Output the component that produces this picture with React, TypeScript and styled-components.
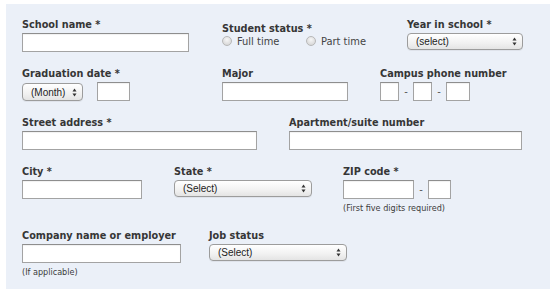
import React from 'react';
import styled, { createGlobalStyle } from 'styled-components';

const GlobalStyle = createGlobalStyle`
  html, body {
    margin: 0;
    padding: 0;
    background: #ffffff;
  }
  body {
    font-family: "DejaVu Sans Condensed", "DejaVu Sans", Verdana, sans-serif;
  }
`;

const Panel = styled.div`
  margin: 4px 0 0 6px;
  width: 544px;
  height: 285px;
  box-sizing: border-box;
  padding: 14px 0 0 16px;
  background: #ebf0f8;
`;

const Row = styled.div`
  display: flex;
  align-items: flex-start;
  margin-bottom: 15px;
`;

const Field = styled.div<{ $w?: number; $offset?: number }>`
  flex: 0 0 ${(p) => (p.$w ? `${p.$w}px` : 'auto')};
  padding-top: ${(p) => p.$offset || 0}px;
`;

const Label = styled.div`
  font-size: 10.8px;
  line-height: 14px;
  font-weight: bold;
  color: #363636;
  margin-bottom: 1px;
  white-space: nowrap;
`;

const Controls = styled.div`
  display: flex;
  align-items: flex-start;
`;

const TextInput = styled.div<{ $w: number }>`
  width: ${(p) => p.$w}px;
  height: 19px;
  box-sizing: border-box;
  background: #ffffff;
  border: 1px solid #a3a3a3;
  border-top-color: #8e8e8e;
  box-shadow: inset 0 1px 1px rgba(0, 0, 0, 0.06);
`;

const Dash = styled.span`
  width: 14px;
  text-align: center;
  font-size: 11px;
  line-height: 19px;
  color: #555;
`;

const SelectBox = styled.div<{ $w: number; $h?: number }>`
  width: ${(p) => p.$w}px;
  height: ${(p) => p.$h || 17}px;
  margin-top: 1px;
  box-sizing: border-box;
  display: flex;
  align-items: center;
  justify-content: space-between;
  padding: 0 5px 0 8px;
  border: 1px solid #9c9c9c;
  border-radius: 4px;
  background: linear-gradient(#ffffff, #f1f1f1 60%, #e4e4e4);
  box-shadow: 0 1px 0 rgba(0, 0, 0, 0.05);
  font-family: "Liberation Sans", Arial, sans-serif;
  font-size: 10px;
  color: #222;
`;

const Hint = styled.div`
  font-size: 9px;
  line-height: 12px;
  color: #3c3c3c;
  margin-top: 3px;
  white-space: nowrap;
`;

const RadioGroup = styled.div`
  display: flex;
  align-items: center;
  height: 14px;
  margin-top: -3px;
`;

const RadioItem = styled.label<{ $w: number }>`
  width: ${(p) => p.$w}px;
  display: flex;
  align-items: center;
  font-size: 11px;
  color: #444;
  white-space: nowrap;
`;

const RadioDot = styled.span`
  width: 10px;
  height: 10px;
  border-radius: 50%;
  margin-right: 5px;
  box-sizing: border-box;
  border: 1px solid #b8b8b8;
  background: radial-gradient(circle at 50% 35%, #f6f6f6, #d0d0d0);
`;

const Arrows = () => (
  <svg width="5" height="9" viewBox="0 0 5 9">
    <path d="M2.5 0.5 L4.5 3.5 L0.5 3.5 Z" fill="#333" />
    <path d="M2.5 8.5 L4.5 5.5 L0.5 5.5 Z" fill="#333" />
  </svg>
);

const Select = ({ w, text, h }: { w: number; text: string; h?: number }) => (
  <SelectBox $w={w} $h={h}>
    <span>{text}</span>
    <Arrows />
  </SelectBox>
);

export default function App() {
  return (
    <>
      <GlobalStyle />
      <Panel>
        <Row>
          <Field $w={200}>
            <Label>School name *</Label>
            <TextInput $w={167} />
          </Field>
          <Field $w={185} $offset={4}>
            <Label>Student status *</Label>
            <RadioGroup>
              <RadioItem $w={84}>
                <RadioDot />
                Full time
              </RadioItem>
              <RadioItem $w={80}>
                <RadioDot />
                Part time
              </RadioItem>
            </RadioGroup>
          </Field>
          <Field>
            <Label>Year in school *</Label>
            <Select w={116} text="(select)" />
          </Field>
        </Row>

        <Row>
          <Field $w={200}>
            <Label>Graduation date *</Label>
            <Controls>
              <Select w={61} h={18} text="(Month)" />
              <span style={{ width: 14 }} />
              <TextInput $w={33} />
            </Controls>
          </Field>
          <Field $w={158}>
            <Label>Major</Label>
            <TextInput $w={126} />
          </Field>
          <Field>
            <Label>Campus phone number</Label>
            <Controls>
              <TextInput $w={19} />
              <Dash>-</Dash>
              <TextInput $w={19} />
              <Dash>-</Dash>
              <TextInput $w={24} />
            </Controls>
          </Field>
        </Row>

        <Row>
          <Field $w={267}>
            <Label>Street address *</Label>
            <TextInput $w={235} />
          </Field>
          <Field>
            <Label>Apartment/suite number</Label>
            <TextInput $w={233} />
          </Field>
        </Row>

        <Row>
          <Field $w={152}>
            <Label>City *</Label>
            <TextInput $w={120} />
          </Field>
          <Field $w={169}>
            <Label>State *</Label>
            <Select w={138} text="(Select)" />
          </Field>
          <Field>
            <Label>ZIP code *</Label>
            <Controls>
              <TextInput $w={71} />
              <Dash>-</Dash>
              <TextInput $w={23} />
            </Controls>
            <Hint>(First five digits required)</Hint>
          </Field>
        </Row>

        <Row>
          <Field $w={187}>
            <Label>Company name or employer</Label>
            <TextInput $w={159} />
            <Hint>(If applicable)</Hint>
          </Field>
          <Field>
            <Label>Job status</Label>
            <Select w={138} text="(Select)" />
          </Field>
        </Row>
      </Panel>
    </>
  );
}
